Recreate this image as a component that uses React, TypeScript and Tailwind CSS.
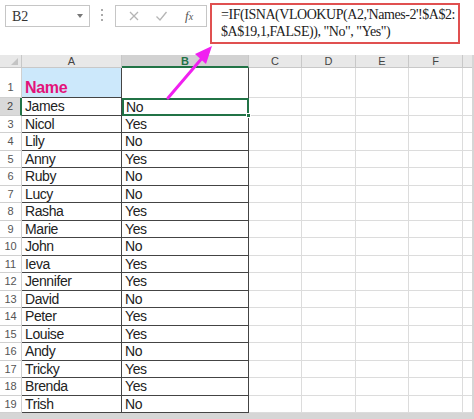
import React from "react";

const rows: [string, string][] = [
  ["James", "No"],
  ["Nicol", "Yes"],
  ["Lily", "No"],
  ["Anny", "Yes"],
  ["Ruby", "No"],
  ["Lucy", "No"],
  ["Rasha", "Yes"],
  ["Marie", "Yes"],
  ["John", "No"],
  ["Ieva", "Yes"],
  ["Jennifer", "Yes"],
  ["David", "No"],
  ["Peter", "Yes"],
  ["Louise", "Yes"],
  ["Andy", "No"],
  ["Tricky", "Yes"],
  ["Brenda", "Yes"],
  ["Trish", "No"],
];

const sans = { fontFamily: '"Liberation Sans", Arial, sans-serif' };
const serif = { fontFamily: '"Liberation Serif", "Times New Roman", serif' };

function EmptyCells() {
  return (
    <>
      <div className="w-[53px] shrink-0 border-r border-b border-[#dcdcdc]" />
      <div className="w-[54px] shrink-0 border-r border-b border-[#dcdcdc]" />
      <div className="w-[53px] shrink-0 border-r border-b border-[#dcdcdc]" />
      <div className="w-[54px] shrink-0 border-r border-b border-[#dcdcdc]" />
      <div className="w-[10px] shrink-0 border-b border-[#dcdcdc]" />
    </>
  );
}

export default function App() {
  return (
    <div className="relative w-[474px] h-[419px] bg-white overflow-hidden" style={sans}>
      {/* Toolbar */}
      <div className="flex h-[55px] items-start">
        <div className="mt-[5px] ml-[5px] flex h-[22px] w-[85px] items-center justify-between border border-[#c6c6c6] pl-[6px] pr-[6px]">
          <span className="text-[14px] text-[#333]" style={serif}>B2</span>
          <span className="h-0 w-0 border-l-[3px] border-r-[3px] border-t-[4px] border-l-transparent border-r-transparent border-t-[#777]" />
        </div>
        <div className="mt-[9px] ml-[10px] flex w-[4px] flex-col items-center gap-[3px]">
          <span className="h-[2px] w-[2px] bg-[#aaa]" />
          <span className="h-[2px] w-[2px] bg-[#aaa]" />
          <span className="h-[2px] w-[2px] bg-[#aaa]" />
        </div>
        <div className="mt-[5px] ml-[11px] flex h-[22px] w-[92px] items-center border border-[#c6c6c6]">
          <svg width="12" height="12" viewBox="0 0 12 12" className="ml-[12px]">
            <path d="M2 2 L10 10 M10 2 L2 10" stroke="#b5b5b5" strokeWidth="1.3" fill="none" />
          </svg>
          <svg width="13" height="12" viewBox="0 0 13 12" className="ml-[15px]">
            <path d="M1.5 6.5 L5 10 L11.5 2" stroke="#b5b5b5" strokeWidth="1.3" fill="none" />
          </svg>
          <span className="ml-[17px] text-[13px] italic text-[#555]" style={serif}>
            f<span className="text-[10px]">x</span>
          </span>
        </div>
        <div
          className="mt-[3px] ml-[3px] h-[41px] w-[250px] border-2 border-[#e05050] pl-[9px] pt-[1px] text-[14px] leading-[17px] tracking-[-0.45px] text-[#222]"
          style={serif}
        >
          <div className="whitespace-nowrap">=IF(ISNA(VLOOKUP(A2,'Names-2'!$A$2:</div>
          <div className="whitespace-nowrap">$A$19,1,FALSE)), "No", "Yes")</div>
        </div>
      </div>

      {/* Sheet */}
      <div className="flex flex-col">
        {/* column headers */}
        <div className="flex h-[13px] bg-[#e8e8e8] text-[11px] leading-[12px] text-[#444]">
          <div className="relative w-[22px] shrink-0 border-r border-b border-[#c8c8c8]">
            <span className="absolute right-[3px] bottom-[2px] h-0 w-0 border-b-[7px] border-l-[7px] border-l-transparent border-b-[#c4c4c4]" />
          </div>
          <div className="flex w-[100px] shrink-0 justify-center border-r border-b border-[#c8c8c8]">A</div>
          <div className="flex w-[127px] shrink-0 justify-center border-b-2 border-r border-[#217346] border-r-[#c8c8c8] bg-[#d2d2d2] font-bold text-[#217346]">B</div>
          <div className="flex w-[53px] shrink-0 justify-center border-r border-b border-[#c8c8c8]">C</div>
          <div className="flex w-[54px] shrink-0 justify-center border-r border-b border-[#c8c8c8]">D</div>
          <div className="flex w-[53px] shrink-0 justify-center border-r border-b border-[#c8c8c8]">E</div>
          <div className="flex w-[54px] shrink-0 justify-center border-r border-b border-[#c8c8c8]">F</div>
          <div className="w-[10px] shrink-0 border-b border-[#c8c8c8]" />
        </div>

        {/* row 1 */}
        <div className="flex h-[30px]">
          <div className="flex w-[22px] shrink-0 items-end justify-center border-r border-b border-[#d0d0d0] pb-[2px] text-[11px] text-[#555]">1</div>
          <div className="flex w-[100px] shrink-0 items-end border-r border-b border-[#444] bg-[#cce8fb] pl-[3px] text-[16px] font-bold leading-[18px] tracking-[-0.3px] text-[#e3127a]">
            Name
          </div>
          <div className="w-[127px] shrink-0 border-r border-[#444] border-b-0" />
          <EmptyCells />
        </div>

        {rows.map(([name, val], i) => {
          const n = i + 2;
          const sel = n === 2;
          return (
            <div key={n} className="flex h-[17.5px] text-[14px] leading-[16px] tracking-[-0.4px] text-[#222]">
              <div
                className={
                  sel
                    ? "flex w-[22px] shrink-0 items-center justify-center border-r-2 border-b border-r-[#217346] border-b-[#d0d0d0] bg-[#d9d9d9] text-[11px] tracking-normal text-[#444]"
                    : "flex w-[22px] shrink-0 items-center justify-center border-r border-b border-[#d0d0d0] text-[11px] tracking-normal text-[#555]"
                }
              >
                {n}
              </div>
              <div className="flex w-[100px] shrink-0 items-center border-r border-b border-[#444] pl-[3px]">{name}</div>
              {sel ? (
                <div className="relative flex w-[127px] shrink-0 items-center border-2 border-[#217346] pl-[2px]">
                  {val}
                  <span className="absolute right-[-4px] bottom-[-4px] h-[5px] w-[5px] border border-white bg-[#217346]" />
                </div>
              ) : (
                <div className="flex w-[127px] shrink-0 items-center border-r border-b border-[#444] pl-[3px]">{val}</div>
              )}
              <EmptyCells />
            </div>
          );
        })}
        <div className="h-[6px] bg-[#d6d6d6]" />
      </div>

      {/* right edge */}
      <div className="absolute right-0 top-[55px] h-[364px] w-[2px] bg-[#d6d6d6]" />

      {/* arrow */}
      <svg className="absolute left-0 top-0" width="474" height="419" viewBox="0 0 474 419">
        <line x1="168" y1="98" x2="203" y2="57" stroke="#f020f0" strokeWidth="3" strokeLinecap="round" />
        <polygon points="212,46 195,54 206,64" fill="#f020f0" />
      </svg>
    </div>
  );
}
